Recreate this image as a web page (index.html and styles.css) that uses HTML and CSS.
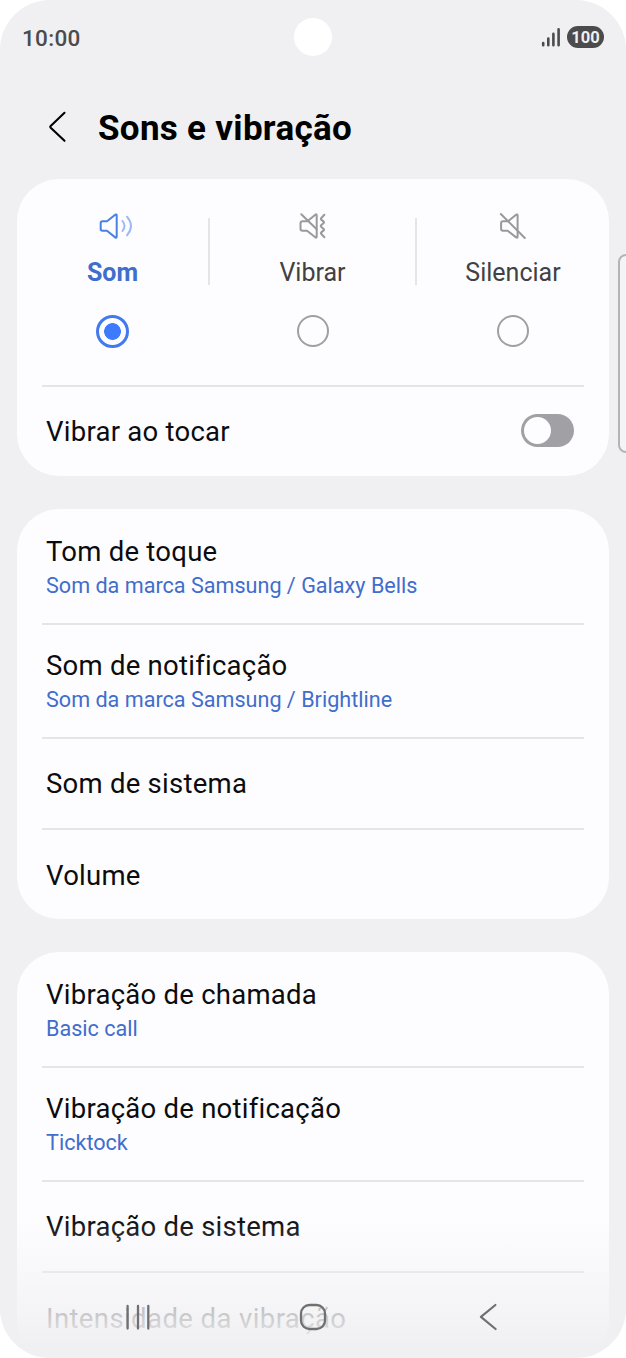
FILE: index.html
```html
<!DOCTYPE html>
<html lang="pt">
<head>
    <meta charset="UTF-8">
    <meta name="viewport" content="width=device-width, initial-scale=1.0">
    <title>Sons e vibração</title>
    <link rel="stylesheet" href="styles.css">
</head>
<body>
    <div class="phone">
        <div class="status-bar">
            <span class="time">10:00</span>
            <span class="camera"></span>
            <div class="status-icons">
                <svg width="20" height="20" viewBox="0 0 20 20" fill="none" stroke="#4b4b4d" stroke-width="2.6" stroke-linecap="round">
                    <path d="M2.2 16.1v2.1M7.3 11.5v6.7M12.4 6.9v11.3M17.6 2.4v15.8"/>
                </svg>
                <span class="battery">100</span>
            </div>
        </div>

        <header class="header">
            <svg width="18" height="32" viewBox="0 0 18 32" fill="none" stroke="#000" stroke-width="2.1" stroke-linecap="round" stroke-linejoin="round">
                <path d="M16.5 1.8L2.7 14.9q-.9.9 0 1.8L16.5 29.8"/>
            </svg>
            <h1>Sons e vibração</h1>
        </header>

        <section class="card">
            <div class="modes">
                <div class="mode active">
                    <svg class="mode-icon" width="36" height="28" viewBox="0 0 36 28" fill="none" stroke="#4a80e4" stroke-width="2" stroke-linecap="round" stroke-linejoin="round">
                        <path d="M4.5 9.2H9L17.2 2.7q1.5-.9 1.5.9v21q0 1.8-1.5.8L9 18.8H4.5q-1.8 0-1.8-1.8v-6q0-1.8 1.8-1.8Z"/>
                        <path stroke="#9bbaf5" d="M24.5 9q4 5 0 10M29 4.7q8 9.3 0 18.6"/>
                    </svg>
                    <span class="mode-name">Som</span>
                    <span class="radio"></span>
                </div>
                <span class="separator"></span>
                <div class="mode">
                    <svg class="mode-icon" width="28" height="28" viewBox="0 0 28 28" fill="none" stroke="#99999b" stroke-width="2" stroke-linecap="round" stroke-linejoin="round">
                        <path d="M2.3 2.3L17.7 17.2"/>
                        <path d="M8.5 9.2H3.7Q1.5 9.2 1.5 11.2v5.6q0 2 2.2 2H8L16.3 25.3q1.4.9 1.4-.8V3.5q0-1.8-1.4-.8L9.9 8"/>
                        <path d="M25.4 2.7L22.1 6.2q-.6.7.1 1.4l2.5 2q.7.7 0 1.4l-2.6 2.3q-.7.7 0 1.4l2.6 2.3q.7.7 0 1.4l-2.5 2q-.7.7-.1 1.4l3.3 3.5"/>
                    </svg>
                    <span class="mode-name">Vibrar</span>
                    <span class="radio"></span>
                </div>
                <span class="separator"></span>
                <div class="mode">
                    <svg class="mode-icon" width="28" height="28" viewBox="0 0 28 28" fill="none" stroke="#99999b" stroke-width="2" stroke-linecap="round" stroke-linejoin="round">
                        <path d="M1.8 2L25.8 26"/>
                        <path d="M9 9.2H4Q2.1 9.2 2.1 11.1v5.7q0 2 1.9 2H8.7L17.1 25.4q1.5.9 1.5-.8V19M10 8.5L17.1 2.7q1.5-.9 1.5.9v14"/>
                    </svg>
                    <span class="mode-name">Silenciar</span>
                    <span class="radio"></span>
                </div>
            </div>
            <div class="row toggle-row">
                <span class="row-title">Vibrar ao tocar</span>
                <span class="switch"></span>
            </div>
        </section>

        <section class="card">
            <div class="row tall">
                <span class="row-title">Tom de toque</span>
                <span class="row-value">Som da marca Samsung / Galaxy Bells</span>
            </div>
            <div class="row tall">
                <span class="row-title">Som de notificação</span>
                <span class="row-value">Som da marca Samsung / Brightline</span>
            </div>
            <div class="row">
                <span class="row-title">Som de sistema</span>
            </div>
            <div class="row">
                <span class="row-title">Volume</span>
            </div>
        </section>

        <section class="card">
            <div class="row tall">
                <span class="row-title">Vibração de chamada</span>
                <span class="row-value">Basic call</span>
            </div>
            <div class="row tall">
                <span class="row-title">Vibração de notificação</span>
                <span class="row-value">Ticktock</span>
            </div>
            <div class="row">
                <span class="row-title">Vibração de sistema</span>
            </div>
            <div class="row">
                <span class="row-title faded">Intensidade da vibração</span>
            </div>
        </section>

        <span class="edge-handle"></span>

        <nav class="nav-bar">
            <svg width="28" height="28" viewBox="0 0 28 28" fill="none" stroke="#707072" stroke-width="2.3" stroke-linecap="round">
                <path d="M3.6 3v22.6M14 3v22.6M24.3 3v22.6"/>
            </svg>
            <svg width="28" height="28" viewBox="0 0 28 28" fill="none" stroke="#707072" stroke-width="2.3">
                <rect x="2" y="2" width="24" height="24" rx="8.5"/>
            </svg>
            <svg width="28" height="28" viewBox="0 0 28 28" fill="none" stroke="#707072" stroke-width="2.2" stroke-linecap="round" stroke-linejoin="round">
                <path d="M21.4 2L6.9 13.9 21.6 26"/>
            </svg>
        </nav>
    </div>
</body>
</html>
```
FILE: styles.css
```css
* {
    box-sizing: border-box;
}
body {
    margin: 0;
    background: #fff;
    font-family: Roboto, "Liberation Sans", sans-serif;
    color: #0c0c0e;
}
.phone {
    position: relative;
    width: 626px;
    height: 1358px;
    overflow: hidden;
    background: #f0f0f2;
    border-radius: 50px;
}
.status-bar {
    display: grid;
    grid-template-columns: 1fr 38px 1fr;
    align-items: center;
    height: 74px;
    padding: 0 22px;
}
.time {
    padding-top: 1px;
    font-size: 22.5px;
    font-weight: 500;
    letter-spacing: 0.3px;
    color: #4b4b4d;
}
.camera {
    width: 38px;
    height: 38px;
    border-radius: 50%;
    background: #fff;
}
.status-icons {
    display: flex;
    justify-content: flex-end;
    align-items: center;
    gap: 6px;
}
.battery {
    width: 37px;
    height: 22px;
    border-radius: 11px;
    background: #4b4b4d;
    color: #f0f0f2;
    font-size: 16.5px;
    font-weight: 700;
    line-height: 23px;
    text-align: center;
}
.header {
    display: flex;
    align-items: center;
    gap: 32px;
    height: 105px;
    padding-left: 48px;
}
.header h1 {
    margin: 0;
    padding-top: 3px;
    font-size: 35px;
    font-weight: 700;
    letter-spacing: 0.3px;
    color: #000;
}
.card {
    width: 592px;
    margin: 0 0 33px 17px;
    padding: 0 25px;
    border-radius: 42px;
    background: #fdfdff;
}
.modes {
    display: grid;
    grid-template-columns: 166px 2px 205px 2px 192px;
    justify-items: center;
    height: 206px;
    margin-right: -25px;
    padding-top: 33px;
}
.mode {
    display: flex;
    flex-direction: column;
    align-items: center;
}
.mode.active {
    padding-right: 25px;
}
.mode-icon {
    margin-bottom: 16px;
}
.active .mode-icon {
    margin-left: 7px;
}
.mode-name {
    height: 34px;
    font-size: 25px;
    line-height: 34px;
    color: #414143;
}
.active .mode-name {
    font-weight: 700;
    color: #416dcc;
}
.radio {
    width: 32px;
    height: 32px;
    margin-top: 25px;
    border: 2.5px solid #a0a0a3;
    border-radius: 50%;
}
.active .radio {
    width: 33px;
    height: 33px;
    border: 3px solid #4179ef;
    background: radial-gradient(circle, #3d7bfe 8px, transparent 8.7px);
}
.separator {
    width: 2px;
    height: 67px;
    margin-top: 6px;
    background: #e5e5e7;
}
.row {
    display: flex;
    flex-direction: column;
    justify-content: center;
    height: 91px;
    padding: 1px 4px 0;
}
.modes + .row,
.row + .row {
    border-top: 2px solid #e5e5e7;
}
.row:last-child {
    padding-top: 2px;
}
.tall {
    height: 114px;
    padding-top: 2px;
}
.tall + .tall {
    padding-top: 0;
}
.row.toggle-row {
    flex-direction: row;
    justify-content: space-between;
    align-items: center;
    padding: 0 10px 2px 4px;
}
.row-title {
    font-size: 27.5px;
    line-height: 38px;
    letter-spacing: 0.25px;
}
.row-value {
    font-size: 21.6px;
    line-height: 30px;
    color: #416dcc;
}
.switch {
    width: 53px;
    height: 33px;
    padding: 3px;
    border-radius: 17px;
    background: #a0a0a5;
}
.switch::before {
    content: "";
    display: block;
    width: 27px;
    height: 27px;
    border-radius: 50%;
    background: #fdfdff;
}
.toggle-row .row-title {
    padding-top: 2px;
}
.faded {
    color: #707072;
    letter-spacing: 0.4px;
}
.edge-handle {
    position: absolute;
    top: 254px;
    right: -12px;
    width: 20px;
    height: 199px;
    border: 2px solid #b4b4b7;
    border-radius: 8px;
    background: #f4f4f6;
}
.nav-bar {
    position: absolute;
    left: 0;
    bottom: 0;
    display: flex;
    justify-content: space-between;
    width: 100%;
    height: 140px;
    padding: 85px 124px 0;
    background: linear-gradient(rgba(240, 240, 242, 0), rgba(240, 240, 242, 0.7) 70%, #f0f0f2 92%);
}
```
